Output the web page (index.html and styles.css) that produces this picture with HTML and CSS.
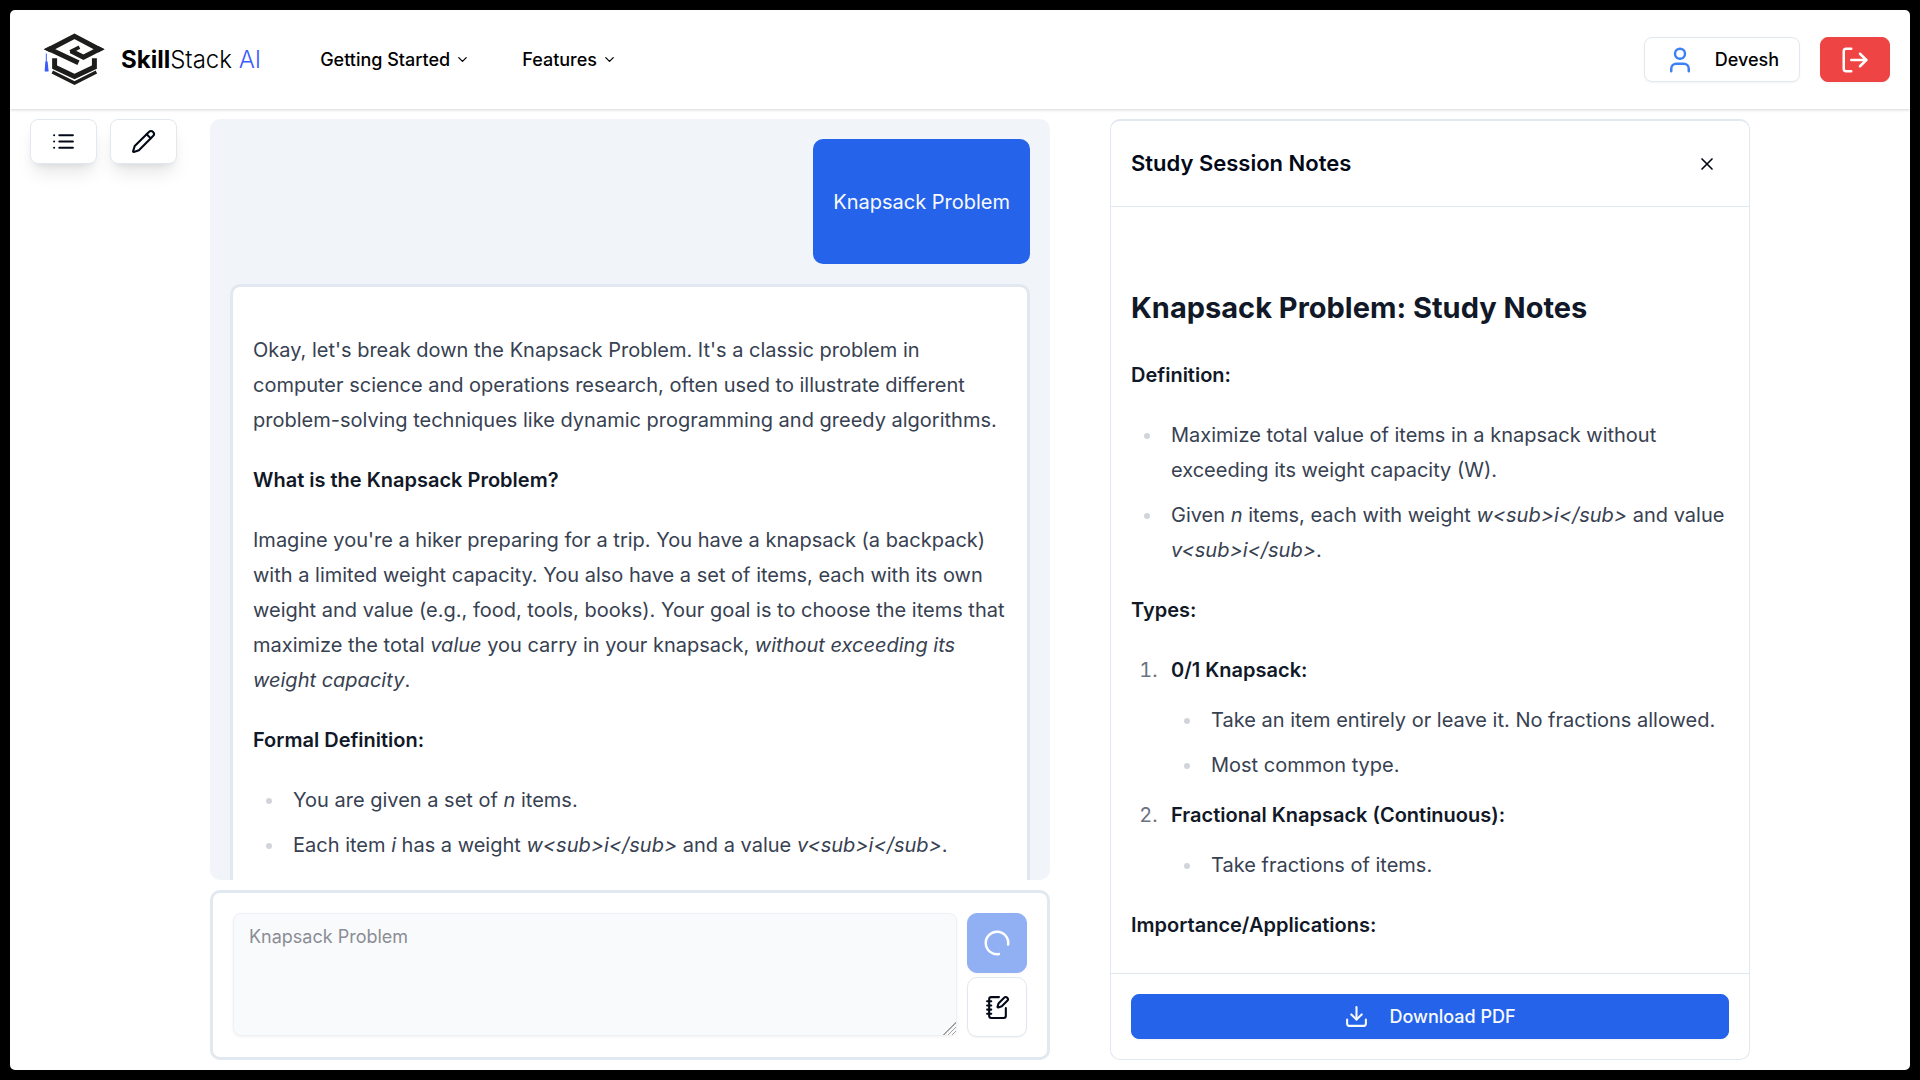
FILE: index.html
```html
<!DOCTYPE html>
<html lang="en">
<head>
<meta charset="utf-8">
<title>SkillStack AI</title>
<link rel="stylesheet" href="styles.css">
</head>
<body>
<div class="app">
  <header class="topbar">
    <a class="brand" href="#" aria-label="SkillStack AI home">
      <svg class="brand-mark" viewBox="130 98 190 164" aria-hidden="true">
        <g fill="none" stroke="#1d1d1b" stroke-width="15">
          <path d="M237 190L150 149L225 110L299 149L252 173L214 154"/>
          <path d="M212 157L240 143" stroke-width="11"/>
          <path d="M165 176V203L225 231L285 203V176"/>
          <path d="M158 218L225 251L291 218" stroke-width="10"/>
        </g>
        <path d="M132 149L152 139V159ZM316 149L296 139V159Z" fill="#1d1d1b"/>
        <path d="M140 162V190" stroke="#3b5bfd" stroke-width="3"/>
        <path d="M137 186H144L147 216H135Z" fill="#3b5bfd"/>
      </svg>
      <span class="brand-name"><b>Skill</b>Stack <em>AI</em></span>
    </a>
    <nav class="menu">
      <button class="menu-item" type="button">Getting Started
        <svg class="icon icon-xs" viewBox="0 0 24 24"><path d="m6 9 6 6 6-6"/></svg>
      </button>
      <button class="menu-item" type="button">Features
        <svg class="icon icon-xs" viewBox="0 0 24 24"><path d="m6 9 6 6 6-6"/></svg>
      </button>
    </nav>
    <div class="account">
      <button class="btn btn-user" type="button">
        <svg class="icon icon-lg" viewBox="0 0 24 24"><path d="M19 21v-2a4 4 0 0 0-4-4H9a4 4 0 0 0-4 4v2"/><circle cx="12" cy="7" r="4"/></svg>
        Devesh
      </button>
      <button class="btn btn-logout" type="button" aria-label="Log out">
        <svg class="icon icon-lg" viewBox="0 0 24 24"><path d="M9 21H5a2 2 0 0 1-2-2V5a2 2 0 0 1 2-2h4"/><path d="m16 17 5-5-5-5"/><path d="M21 12H9"/></svg>
      </button>
    </div>
  </header>

  <main class="workspace">
    <aside class="tools">
      <button class="btn btn-tool" type="button" aria-label="Sessions">
        <svg class="icon" viewBox="0 0 24 24"><path d="M8 6h13M8 12h13M8 18h13M3 6h.01M3 12h.01M3 18h.01"/></svg>
      </button>
      <button class="btn btn-tool" type="button" aria-label="New session">
        <svg class="icon" viewBox="0 0 24 24"><path d="M21.174 6.812a1 1 0 0 0-3.986-3.987L3.842 16.174a2 2 0 0 0-.5.83l-1.321 4.352a.5.5 0 0 0 .623.622l4.353-1.32a2 2 0 0 0 .83-.497z"/><path d="m15 5 4 4"/></svg>
      </button>
    </aside>

    <div class="columns">
    <section class="chat">
      <div class="messages">
        <div class="message message-user prose"><p>Knapsack Problem</p></div>
        <article class="message message-reply prose">
          <p>Okay, let's break down the Knapsack Problem. It's a classic problem in computer science and operations research, often used to illustrate different problem-solving techniques like dynamic programming and greedy algorithms.</p>
          <p><strong>What is the Knapsack Problem?</strong></p>
          <p>Imagine you're a hiker preparing for a trip. You have a knapsack (a backpack) with a limited weight capacity. You also have a set of items, each with its own weight and value (e.g., food, tools, books). Your goal is to choose the items that maximize the total <em>value</em> you carry in your knapsack, <em>without exceeding its weight capacity</em>.</p>
          <p><strong>Formal Definition:</strong></p>
          <ul>
            <li>You are given a set of <em>n</em> items.</li>
            <li>Each item <em>i</em> has a weight <em>w&lt;sub&gt;i&lt;/sub&gt;</em> and a value <em>v&lt;sub&gt;i&lt;/sub&gt;</em>.</li>
          </ul>
        </article>
      </div>
      <form class="composer">
        <textarea class="prompt" aria-label="Message" placeholder="Knapsack Problem" disabled></textarea>
        <div class="composer-actions">
          <button class="btn btn-square btn-send" type="button" aria-label="Sending" disabled>
            <svg class="icon icon-lg" viewBox="0 0 24 24"><path d="M21 12a9 9 0 1 1-6.219-8.56" transform="rotate(80 12 12)"/></svg>
          </button>
          <button class="btn btn-square" type="button" aria-label="Create notes">
            <svg class="icon" viewBox="0 0 24 24"><path d="M13.4 2H6a2 2 0 0 0-2 2v16a2 2 0 0 0 2 2h12a2 2 0 0 0 2-2v-7.4"/><path d="M2 6h4M2 10h4M2 14h4M2 18h4"/><path d="M21.378 5.626a1 1 0 1 0-3.004-3.004l-5.01 5.012a2 2 0 0 0-.506.854l-.837 2.87a.5.5 0 0 0 .62.62l2.87-.837a2 2 0 0 0 .854-.506z"/></svg>
          </button>
        </div>
      </form>
    </section>

    <section class="notes">
      <header class="notes-header">
        <h1 class="notes-title">Study Session Notes</h1>
        <button class="btn-close" type="button" aria-label="Close notes">
          <svg class="icon icon-sm" viewBox="0 0 24 24"><path d="M18 6 6 18M6 6l12 12"/></svg>
        </button>
      </header>
      <div class="notes-body prose">
        <h2>Knapsack Problem: Study Notes</h2>
        <p><strong>Definition:</strong></p>
        <ul>
          <li>Maximize total value of items in a knapsack without exceeding its weight capacity (W).</li>
          <li>Given <em>n</em> items, each with weight <em>w&lt;sub&gt;i&lt;/sub&gt;</em> and value <em>v&lt;sub&gt;i&lt;/sub&gt;</em>.</li>
        </ul>
        <p><strong>Types:</strong></p>
        <ol>
          <li><strong>0/1 Knapsack:</strong>
            <ul>
              <li>Take an item entirely or leave it. No fractions allowed.</li>
              <li>Most common type.</li>
            </ul>
          </li>
          <li><strong>Fractional Knapsack (Continuous):</strong>
            <ul>
              <li>Take fractions of items.</li>
            </ul>
          </li>
        </ol>
        <p><strong>Importance/Applications:</strong></p>
      </div>
      <footer class="notes-footer">
        <button class="btn btn-download" type="button">
          <svg class="icon" viewBox="0 0 24 24"><path d="M21 15v4a2 2 0 0 1-2 2H5a2 2 0 0 1-2-2v-4"/><path d="m7 10 5 5 5-5"/><path d="M12 15V3"/></svg>
          Download PDF
        </button>
      </footer>
    </section>
    </div>
  </main>
</div>
</body>
</html>
```
FILE: styles.css
```css
* {
  box-sizing: border-box;
}

body {
  margin: 0;
  height: 100vh;
  padding: 10px;
  background: #000;
  color: #020817;
  font-family: Inter, "Liberation Sans", sans-serif;
  font-size: 18px;
  line-height: 25px;
}

button,
textarea {
  font: inherit;
  color: inherit;
}

button {
  padding: 0;
  border: 0;
  background: none;
}

.app {
  display: flex;
  flex-direction: column;
  height: 100%;
  border-radius: 5px;
  background: #fff;
  overflow: hidden;
}

.icon {
  flex: none;
  width: 25px;
  height: 25px;
  fill: none;
  stroke: currentColor;
  stroke-width: 2;
  stroke-linecap: round;
  stroke-linejoin: round;
}

.icon-xs {
  width: 15px;
  height: 15px;
}

.icon-sm {
  width: 20px;
  height: 20px;
}

.icon-lg {
  width: 30px;
  height: 30px;
}

.btn {
  display: flex;
  align-items: center;
  justify-content: center;
  gap: 20px;
  height: 45px;
  border: 1px solid #e2e8f0;
  border-radius: 8px;
  background: #fff;
  font-weight: 500;
  box-shadow: 0 1px 2px rgb(0 0 0 / 5%);
}

/* Top bar */

.topbar {
  flex: none;
  display: flex;
  align-items: center;
  height: 99px;
  padding: 0 20px 0 33px;
  box-shadow: 0 1px 3px rgb(0 0 0 / 16%);
}

.brand {
  display: flex;
  align-items: center;
  gap: 15px;
  color: #000;
  text-decoration: none;
}

.brand-mark {
  width: 63px;
  height: 55px;
}

.brand-name {
  font-size: 24px;
  font-weight: 300;
}

.brand-name b {
  font-weight: 700;
}

.brand-name em {
  color: #3b5bfd;
  font-style: normal;
}

.menu {
  display: flex;
  gap: 52px;
  margin-left: 59px;
}

.menu-item {
  display: flex;
  align-items: center;
  gap: 5px;
  color: #000;
  font-weight: 500;
}

.account {
  display: flex;
  gap: 20px;
  margin-left: auto;
}

.btn-user {
  padding: 0 20px;
  color: #000;
}

.btn-user .icon {
  color: #3b82f6;
}

.btn-logout {
  width: 70px;
  border-color: #ef4444;
  background: #ef4444;
  color: #fff;
}

/* Workspace */

.workspace {
  flex: 1;
  min-height: 0;
  display: grid;
  grid-template-columns: 200px minmax(0, 1fr);
  padding: 10px 160px 10px 0;
}

.columns {
  display: grid;
  grid-template-columns: minmax(0, 21fr) minmax(0, 16fr);
  grid-template-rows: minmax(0, 1fr);
  column-gap: 60px;
  min-height: 0;
}

.tools {
  display: flex;
  align-items: flex-start;
  gap: 13px;
  padding-left: 20px;
}

.btn-tool {
  width: 67px;
  box-shadow: 0 12px 18px -4px rgb(0 0 0 / 10%), 0 5px 8px -5px rgb(0 0 0 / 10%);
}

.chat {
  display: flex;
  flex-direction: column;
  gap: 10px;
  min-height: 0;
}

.messages {
  flex: 1;
  min-height: 0;
  display: flex;
  flex-direction: column;
  gap: 20px;
  padding: 20px 20px 0;
  border-radius: 10px;
  background: #f1f5f9;
  overflow: hidden;
}

.message {
  flex: none;
  padding: 21px 20px 19px;
  border-radius: 10px;
}

.message-user {
  align-self: flex-end;
  background: #2563eb;
}

.message-user.prose {
  color: #f8fafc;
}

.message-reply {
  border: 3px solid #e2e8f0;
  background: #fff;
}

.composer {
  flex: none;
  display: flex;
  align-items: flex-start;
  gap: 10px;
  padding: 20px;
  border: 3px solid #e2e8f0;
  border-radius: 10px;
}

.prompt {
  flex: 1;
  height: 123px;
  padding: 10px 15px;
  border: 1px solid #eef2f7;
  border-radius: 8px;
  background: #f9fafb;
  box-shadow: 0 1px 3px rgb(0 0 0 / 6%);
  resize: vertical;
}

.prompt::placeholder {
  color: #8b8d96;
}

.prompt::-webkit-resizer {
  background:
    linear-gradient(135deg, #f9fafb 50%, transparent 50%),
    repeating-linear-gradient(135deg, #a3a3a3 0 1px, #f9fafb 1px 3px);
}

.composer-actions {
  display: flex;
  flex-direction: column;
  gap: 4px;
}

.btn-square {
  width: 60px;
  height: 60px;
  border-radius: 10px;
}

.btn-send {
  border-color: #2563eb;
  background: #2563eb;
  color: #fff;
  opacity: 0.5;
}

/* Study notes */

.notes {
  display: flex;
  flex-direction: column;
  min-height: 0;
  border: 1px solid #e2e8f0;
  border-top-width: 2px;
  border-radius: 10px;
}

.notes-header {
  display: flex;
  align-items: center;
  justify-content: space-between;
  padding: 20px;
  border-bottom: 1px solid #e2e8f0;
}

.notes-title {
  margin: 0;
  font-size: 22px;
  font-weight: 600;
}

.btn-close {
  display: grid;
  place-items: center;
  width: 45px;
  height: 45px;
}

.notes-body {
  flex: 1;
  min-height: 0;
  padding: 21px 20px 19px;
  overflow: hidden;
}

.notes-footer {
  padding: 20px;
  border-top: 1px solid #e2e8f0;
}

.btn-download {
  width: 100%;
  border-color: #2563eb;
  background: #2563eb;
  color: #f8fafc;
}

/* Rendered markdown */

.prose {
  color: #374151;
  font-size: 20px;
  line-height: 35px;
}

.prose p,
.prose ul,
.prose ol {
  margin: 25px 0;
}

.prose ul,
.prose ol {
  padding-left: 32px;
}

.prose ul {
  list-style-type: disc;
}

.prose li {
  margin: 10px 0;
  padding-left: 8px;
}

.prose li ul {
  margin: 15px 0;
}

.prose ul > li::marker {
  color: #d1d5db;
}

.prose ol > li::marker {
  color: #6b7280;
}

.prose strong {
  color: #111827;
  font-weight: 600;
}

.prose h2 {
  margin: 60px 0 30px;
  color: #111827;
  font-size: 29px;
  font-weight: 700;
  line-height: 40px;
}
```
